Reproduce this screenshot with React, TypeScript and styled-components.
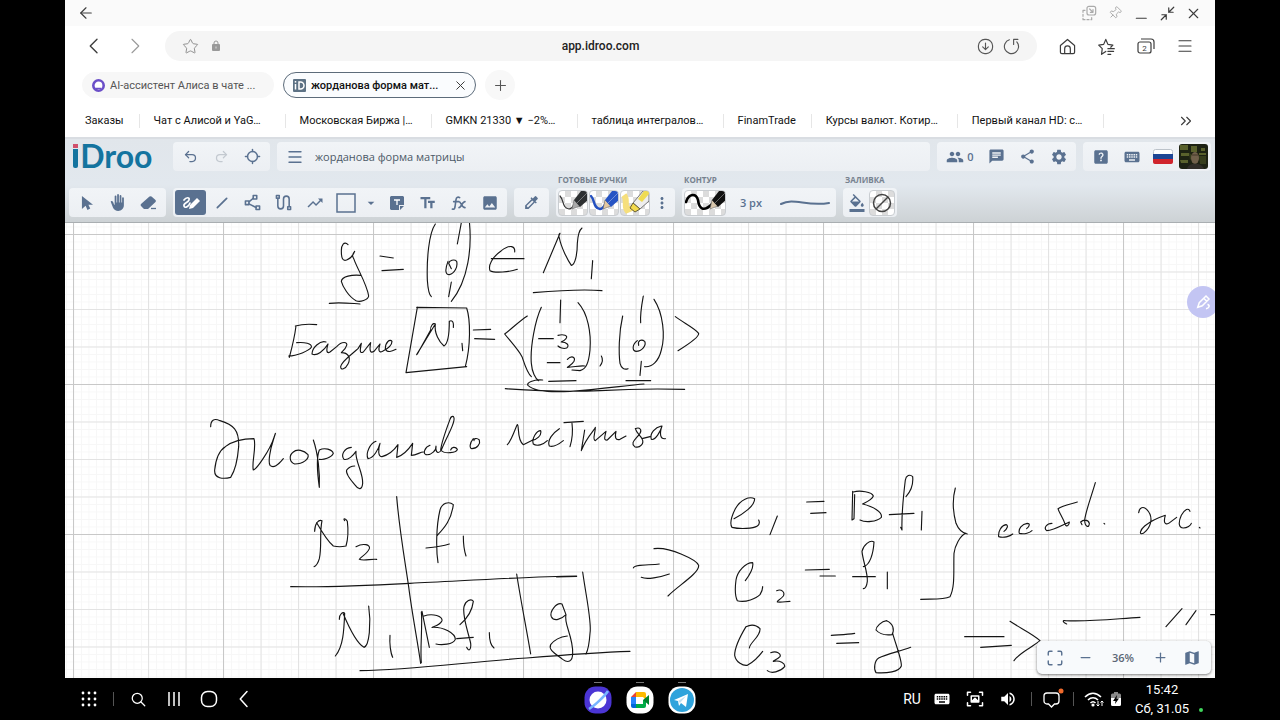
import React from "react";
import styled, { createGlobalStyle } from "styled-components";
import {
  ArrowLeft, ChevronsRight, Locate, Maximize, Menu, Minus, Pin, Plus, Star, Undo2, Redo2, X,
} from "lucide-react";
import {
  MdArrowDropDown, MdBackHand, MdChat, MdColorize, MdFormatColorFill, MdHelpCenter, MdImage, MdKeyboard, MdMap,
  MdMoreVert, MdPeople, MdSettings, MdShare, MdTrendingUp, MdVolumeUp,
} from "react-icons/md";

const slate = "#5a7190";

const GlobalStyle = createGlobalStyle`
  * { box-sizing: border-box; }
  body { margin: 0; background: #000; }
  button, input { font: inherit; color: inherit; border: 0; background: none; padding: 0; margin: 0; }
  svg { display: block; flex: none; }
`;

const Screen = styled.div`
  min-height: 100vh;
  display: flex;
  flex-direction: column;
  background: #000;
  font-family: Roboto, "Liberation Sans", sans-serif;
  font-size: 12px;
`;
const BrowserWindow = styled.div`
  flex: 1;
  margin: 0 65px;
  display: flex;
  flex-direction: column;
  background: #fff;
  overflow: hidden;
`;
const IconButton = styled.button<{ $w: number; $color?: string }>`
  flex: none;
  width: ${(p) => p.$w}px;
  height: 26px;
  display: flex;
  align-items: center;
  justify-content: center;
  color: ${(p) => p.$color ?? "#3c3c3c"};
`;
const Spacer = styled.div`
  flex: 1;
`;

/* Browser chrome */
const TitleBar = styled.header`
  height: 26px;
  display: flex;
  align-items: center;
  padding: 0 9px 0 8px;
  background: #fafafa;
`;
const TiltedPin = styled(Pin)`
  transform: rotate(45deg);
`;
const AddressRow = styled.div`
  height: 40px;
  display: flex;
  align-items: center;
  padding: 0 11px 0 8px;
`;
const UrlBar = styled.div`
  flex: 1;
  min-width: 0;
  height: 30px;
  margin: 0 11px 0 10px;
  padding: 0 13px 0 12px;
  display: flex;
  align-items: center;
  border-radius: 15px;
  background: #f5f5f5;
`;
const UrlInput = styled.input`
  flex: 1;
  min-width: 0;
  text-align: center;
  font-weight: 500;
  color: #222;
`;
const TabStrip = styled.nav`
  height: 38px;
  display: flex;
  align-items: center;
  gap: 9px;
  padding-left: 17px;
  font-size: 11px;
`;
const Tab = styled.div<{ $active?: boolean }>`
  width: ${(p) => (p.$active ? 193 : 192)}px;
  height: 26px;
  display: flex;
  align-items: center;
  padding: 0 2px 0 9px;
  border-radius: 13px;
  border: 1px solid ${(p) => (p.$active ? "#5c6b7a" : "#f7f7f7")};
  background: ${(p) => (p.$active ? "#fafcfe" : "#f7f7f7")};
  color: ${(p) => (p.$active ? "#111" : "#555")};
  font-weight: ${(p) => (p.$active ? 500 : 400)};
`;
const TabLabel = styled.button`
  flex: 1;
  display: flex;
  align-items: center;
  gap: 5px;
  white-space: nowrap;
`;
const NewTab = styled.button`
  width: 30px;
  height: 30px;
  border-radius: 15px;
  display: grid;
  place-items: center;
  background: #f8f8f8;
  color: #555;
`;
const Bookmarks = styled.nav`
  height: 33px;
  display: flex;
  align-items: center;
  padding: 0 10px 0 6px;
  font-size: 11px;
`;
const Bookmark = styled.a<{ $wide?: boolean }>`
  flex: none;
  width: ${(p) => (p.$wide ? "146px" : "auto")};
  padding: 0 15px 0 14px;
  border-right: 1px solid #e6e6e6;
  line-height: 14px;
  color: #111;
  text-decoration: none;
  white-space: nowrap;
`;

/* Whiteboard application */
const AppBar = styled.div`
  display: flex;
  flex-direction: column;
  gap: 1px;
  height: 86px;
  padding: 3px 4px 4px;
  border-top: 2px solid #d9dde2;
  border-bottom: 1px solid #a9aeb1;
  background: linear-gradient(#e1e6eb, #e2e8ee 55%, #cdd2d5);
  color: ${slate};
  font-family: "Open Sans", "Noto Sans", sans-serif;
`;
const AppRow = styled.div`
  display: flex;
  gap: 7px;
  align-items: flex-end;
`;
const Group = styled.div<{ $grow?: boolean }>`
  flex: ${(p) => (p.$grow ? "1" : "none")};
  height: 29px;
  display: flex;
  align-items: center;
  padding: 0 2px;
  border-radius: 4px;
  background: linear-gradient(#f1f4f7, #eceff3);
`;
const SwatchGroup = styled(Group)`
  gap: 1px;
`;
const Section = styled.section`
  display: flex;
  flex-direction: column;
`;
const SectionLabel = styled.h2`
  margin: 0;
  height: 16px;
  padding: 2px 2px 0;
  font-size: 8px;
  line-height: 12px;
  font-weight: 700;
  color: #77828f;
`;
const Logo = styled.h1`
  flex: none;
  width: 97px;
  height: 29px;
  margin: 0;
  padding-left: 3px;
  font-family: Lato, sans-serif;
  font-size: 32px;
  line-height: 28px;
  font-weight: 700;
  color: #14749f;
`;
const LogoI = styled.span`
  position: relative;
  color: transparent;
  &::before, &::after {
    content: "";
    position: absolute;
    left: 1px;
    width: 5px;
  }
  &::before { top: 8px; height: 4px; background: #d0506c; }
  &::after { top: 13px; height: 19px; background: #14749f; border-radius: 0 0 2px 2px; }
`;
const Tool = styled.button<{ $active?: boolean; $w?: number; $faded?: boolean }>`
  flex: none;
  width: ${(p) => p.$w ?? 31}px;
  height: 25px;
  display: flex;
  align-items: center;
  justify-content: center;
  gap: 3px;
  border-radius: 3px;
  background: ${(p) => (p.$active ? slate : "none")};
  color: ${(p) => (p.$active ? "#fff" : p.$faded ? "#c3c9d0" : slate)};
`;
const Swatch = styled.button<{ $w: number }>`
  flex: none;
  width: ${(p) => p.$w}px;
  height: 26px;
  border: 1px solid #c9cdd1;
  border-radius: 4px;
  overflow: hidden;
  background: repeating-conic-gradient(#dcdcdc 0 25%, #fff 0 50%) 0 0 / 12px 12px;
`;
const DocTitle = styled.input`
  flex: 1;
  min-width: 0;
  padding-left: 5px;
  font-size: 11px;
  color: #4c5967;
`;
const StrokeSize = styled.span`
  width: 50px;
  text-align: center;
  font-size: 11px;
  font-weight: 600;
`;
const PeopleCount = styled.span`
  font-size: 11px;
  font-weight: 600;
`;

const Board = styled.main`
  position: relative;
  flex: 1;
  min-height: 455px;
  overflow: hidden;
  background: #fff;
`;
const Ink = styled.svg`
  position: absolute;
  inset: 0;
  width: 100%;
  height: 100%;
`;
const FloatingPen = styled.button`
  position: absolute;
  top: 63px;
  right: -4px;
  width: 32px;
  height: 32px;
  display: grid;
  place-items: center;
  border-radius: 16px;
  background: #c3c5f3;
`;
const ZoomPanel = styled.div`
  position: absolute;
  right: 4px;
  bottom: 4px;
  height: 33px;
  display: flex;
  align-items: center;
  padding: 0 4px 0 2px;
  border-radius: 5px;
  background: #f8fafc;
  box-shadow: 0 1px 3px #0008;
  color: ${slate};
  font-family: "Open Sans", "Noto Sans", sans-serif;
  font-weight: 600;
`;
const ZoomValue = styled.output`
  width: 44px;
  text-align: center;
  font-size: 11px;
  color: #5b6675;
`;

/* System bar */
const TaskBar = styled.footer`
  height: 42px;
  padding: 0 71px;
  display: grid;
  grid-template-columns: 1fr auto 1fr;
  color: #fff;
`;
const TaskGroup = styled.div<{ $end?: boolean }>`
  display: flex;
  align-items: center;
  justify-content: ${(p) => (p.$end ? "flex-end" : "flex-start")};
`;
const Divider = styled.span`
  width: 1px;
  height: 14px;
  margin: 0 7px;
  background: #555;
`;
const AppIcon = styled.button`
  width: 42px;
  height: 42px;
  display: flex;
  flex-direction: column;
  align-items: center;
  gap: 3px;
  padding-top: 4px;
  &::before {
    content: "";
    width: 8px;
    height: 1px;
    background: #777;
  }
`;
const Language = styled.span`
  width: 26px;
  font-size: 14px;
  text-align: center;
`;
const Clock = styled.time`
  width: 62px;
  margin-left: 6px;
  font-size: 13px;
  line-height: 19px;
  text-align: center;
  white-space: nowrap;
`;
const Status = styled.span`
  width: 4px;
  height: 4px;
  margin: 22px 6px 0;
  border-radius: 2px;
  background: #3fd65c;
`;

type IconProps = { size?: number; sw?: number; children: React.ReactNode };
const Line = ({ size = 18, sw = 1.6, children }: IconProps) => (
  <svg width={size} height={size} viewBox="0 0 24 24" fill="none" stroke="currentColor" strokeWidth={sw} strokeLinecap="round" strokeLinejoin="round">
    {children}
  </svg>
);

const bookmarks = [
  ["Заказы"], ["Чат с Алисой и YaG…", 1], ["Московская Биржа |…", 1], ["GMKN 21330 ▼ −2%…", 1],
  ["таблица интегралов…", 1], ["FinamTrade"], ["Курсы валют. Котир…", 1], ["Первый канал HD: с…", 1],
] as [string, number?][];

/* Handwritten strokes; each block has its own origin on the board and is drawn at triple size. */
const ink: { at: [number, number]; d: string[] }[] = [
  {
    at: [280, 220],
    d: [
      "M204 74C192 62 184 76 184 92C184 116 188 124 200 120C212 116 220 104 224 94C216 104 216 108 222 118C232 146 262 196 266 228C264 240 240 248 228 242C206 230 188 200 184 184C186 168 216 164 242 166",
      "M148 250C180 246 210 250 240 252M300 108L340 114M306 152L370 148",
      "M466 12C446 40 440 120 442 180C444 210 446 224 454 230M544 8L532 72",
      "M504 124C494 150 496 164 508 164C524 160 534 140 530 124C522 116 508 122 506 130L514 146M514 186L506 230M568 4C576 80 566 180 514 244",
      "M704 96C706 78 690 72 664 92C636 112 624 136 630 152C644 160 690 156 712 148M634 116L732 116",
      "M790 158L840 40C834 44 836 46 838 54C844 84 864 122 874 136C886 134 892 100 892 70C894 40 898 30 906 24M938 122L934 176M760 218C830 212 900 206 966 212",
      "M110 314C90 312 60 314 46 318M48 318C44 350 34 390 28 412M26 408C50 408 88 392 94 382C98 370 72 366 50 368",
      "M138 366C120 360 96 384 96 402C110 410 132 392 144 372C138 392 140 402 150 396L170 380C186 362 204 366 200 376C196 390 184 396 184 398C204 398 214 412 204 432C196 448 182 452 182 440C184 424 214 404 234 386L244 370C240 390 238 402 250 396L272 368C268 390 270 402 282 394L300 372C294 390 296 400 308 394C320 388 336 376 336 364C330 356 316 366 316 386C322 400 336 394 348 388",
      "M412 262L378 458L560 440M410 262L560 264C572 300 572 380 556 440",
      "M410 404L466 312C460 306 450 320 452 330L412 402M466 312C462 340 478 366 492 378C506 370 508 330 508 304C514 300 522 302 520 322M546 370L548 392",
      "M580 330L632 328M584 356L644 358",
      "M742 288C720 302 690 330 674 342C690 362 716 390 726 410C736 440 742 460 754 470M784 262C766 300 750 380 754 430C756 456 766 476 776 482",
      "M842 240L840 308M776 356L820 356M834 346C850 342 866 346 858 356C852 364 842 366 844 366C860 366 870 376 860 384C850 388 838 382 834 378",
      "M802 428L840 428M862 418C874 406 888 410 882 424C876 436 862 440 862 442C880 442 900 436 914 438M894 248C924 280 934 340 930 390C926 430 918 448 900 452L876 450M964 408C970 418 966 430 960 438",
      "M1028 288C1016 340 1016 400 1020 430C1024 446 1034 450 1044 446M1090 228C1086 250 1080 280 1082 308M1072 362C1056 374 1056 392 1068 394C1086 394 1100 376 1094 364C1084 356 1072 362 1076 376M1084 424L1080 466",
      "M1122 238C1150 280 1156 350 1144 390C1136 424 1116 442 1094 440M1186 290C1210 308 1244 324 1256 340C1258 352 1220 376 1194 392",
      "M806 484L888 482M1038 482L1112 482M788 480C760 478 738 488 744 496C760 512 800 518 870 514C960 508 1040 496 1092 492M676 506C760 512 860 516 960 512C1060 506 1140 506 1214 508",
    ],
  },
  {
    at: [190, 390],
    d: [
      "M62 110C62 90 72 84 90 92C130 104 148 120 146 170C142 220 130 250 122 262C100 268 72 266 74 240C78 200 90 180 106 170C130 152 160 146 192 146C200 170 184 220 190 240C200 238 240 180 252 142C258 124 258 126 250 150C240 180 234 216 240 226C250 236 264 226 280 206",
      "M310 186C296 196 298 216 314 222C340 222 358 206 354 194C342 180 320 176 310 186M370 150C384 190 390 250 388 292C382 250 380 200 388 180C404 172 426 178 430 190C424 204 400 210 388 208",
      "M484 172C462 174 452 196 462 208C474 212 490 196 498 184C494 210 520 250 518 280C516 300 506 300 496 286C480 268 466 250 470 240C478 230 490 228 494 228",
      "M558 154C540 160 526 190 534 206C552 204 566 176 570 160C564 180 564 200 576 200C592 196 610 184 624 164L620 202C640 196 660 172 668 160L664 196C680 196 690 186 700 186",
      "M720 166C704 172 698 190 708 194C724 196 740 180 738 168C736 190 746 192 754 180C770 140 790 110 792 90C794 76 784 76 780 88C768 120 754 160 752 180C764 194 800 188 802 178C796 168 784 172 782 180",
      "M850 146C838 160 838 176 846 176C862 176 872 160 868 150C860 142 850 146 852 152",
      "M952 164C966 150 978 108 982 104C988 104 980 150 1000 164L1024 152C1040 150 1056 136 1052 122C1040 122 1024 146 1030 162C1040 170 1060 164 1072 152M1108 116C1090 128 1070 150 1078 168C1090 172 1110 160 1120 152",
      "M1122 98L1180 94M1146 100C1150 130 1146 150 1140 170M1184 120L1174 182C1190 140 1216 118 1216 112C1216 130 1206 150 1216 152L1248 124C1244 140 1240 152 1252 150L1278 124C1274 142 1276 152 1290 148L1308 138",
      "M1336 116C1350 110 1356 120 1350 130C1336 150 1320 158 1334 170C1350 176 1364 160 1356 146C1350 134 1340 130 1336 116M1356 146L1380 140M1414 108C1396 112 1378 130 1384 148C1396 152 1412 124 1416 108C1408 130 1410 148 1426 146",
    ],
  },
  {
    at: [280, 490],
    d: [
      "M104 124C104 100 116 88 126 92C118 130 126 170 118 206C114 220 108 228 102 230M110 98C126 126 144 154 160 168C176 172 190 170 198 168C206 140 204 110 202 94C196 84 188 84 194 92",
      "M228 170C250 158 272 164 268 176C262 192 240 202 238 208C250 214 274 206 290 208M350 20C358 120 376 220 386 290C396 370 412 450 422 520",
      "M472 136C490 116 514 92 520 44C506 32 486 40 480 60C468 110 468 180 474 218M438 174C460 172 490 168 508 162M550 138C550 160 552 180 558 198",
      "M32 290C140 292 280 286 390 280C560 272 740 260 890 258M830 261L890 259",
      "M178 388C178 370 190 364 194 370C192 420 190 470 166 498M190 372C206 410 230 460 252 472C268 468 274 400 266 348M330 436C328 460 332 490 338 502",
      "M426 364L448 472M424 366C428 400 420 480 424 518M432 378C460 368 488 380 486 392C480 406 458 410 456 412C490 410 526 430 526 448C520 464 484 466 468 462",
      "M540 404C556 390 576 370 580 334C574 324 556 332 552 350C546 380 566 430 572 460C574 480 566 486 560 472M530 446L580 442M628 428C628 450 632 466 642 474M710 252C722 330 740 420 752 492",
      "M846 342C830 336 808 364 814 380C822 396 844 388 858 374L846 342M858 374C850 400 880 440 878 490C878 516 864 520 848 508C828 492 804 480 812 464C824 448 846 440 862 438M908 246C920 330 936 400 930 430C928 460 924 480 918 492",
      "M240 542C400 540 560 516 740 504C860 494 980 486 1050 484M1060 234C1062 222 1110 226 1138 222M1084 262C1100 270 1140 262 1168 252M1122 176C1170 170 1250 210 1256 226C1258 250 1190 290 1164 318",
    ],
  },
  {
    at: [700, 470],
    d: [
      "M102 146C130 132 164 108 164 86C148 78 122 88 106 116C94 140 88 160 96 172C120 178 160 176 172 168C180 162 178 154 176 150M232 138L210 194M320 96L372 94M332 130L378 128",
      "M458 64L456 150L462 146L464 74M460 66C480 60 516 66 520 78C514 92 490 100 488 102C520 110 548 126 544 142C530 156 496 158 480 150",
      "M618 80C636 60 640 40 638 20C630 12 618 16 616 30C610 80 604 130 606 180L602 172M568 134L642 130M666 124L664 180",
      "M136 332C148 316 162 296 158 278C136 278 112 304 108 330C104 360 106 380 112 392C136 400 170 384 180 374C186 364 188 356 188 350M230 362C244 356 256 366 250 378C240 390 230 392 232 396C246 398 258 394 270 394",
      "M316 300L388 298M360 318L406 318M490 290C510 286 520 250 522 216C510 208 490 226 486 244C488 270 504 310 502 334C500 350 494 356 490 356M458 320L526 320M562 306L562 356",
      "M148 534C150 516 182 500 180 476C166 462 150 464 138 470C120 500 104 530 104 556C108 578 130 588 142 586C160 576 176 560 188 544M212 548C230 542 244 550 240 560C230 570 218 572 220 574C240 570 256 580 254 590C240 606 214 612 202 602",
      "M394 496C420 494 440 494 464 490M410 520L476 518M560 452C544 454 528 470 528 480C540 494 560 496 576 494C584 480 580 460 560 452M578 490C586 520 606 570 604 588C598 606 560 610 528 608C520 596 524 572 536 564C560 552 600 544 632 532",
      "M766 54C756 90 760 130 768 160C776 180 790 190 802 192M798 190C780 196 764 230 762 250C760 300 766 350 750 380C730 390 690 386 662 388",
    ],
  },
  {
    at: [930, 470],
    d: [
      "M222 184C232 176 236 166 228 164C214 166 204 184 206 200C220 204 240 200 248 192M290 176C300 168 300 160 292 160C276 162 264 176 268 190C284 194 300 188 306 182",
      "M366 160C350 160 340 174 350 182C370 182 400 164 418 156C418 166 410 172 406 164C398 140 386 126 384 116C400 106 424 102 442 96M496 38C484 80 468 120 464 150C464 170 478 176 478 160C474 146 458 150 452 156L456 164M522 160L524 162",
      "M626 128C628 112 640 108 650 118C672 140 664 172 640 190C626 196 630 180 644 168C664 152 688 142 706 136C700 156 704 166 716 160L740 142M780 124C776 112 764 118 754 136C744 158 746 174 760 174C772 174 782 166 784 160M808 172L810 174",
      "M104 500L222 500M152 532L244 526M240 454C270 474 312 494 330 512C310 530 270 546 252 572M410 462C396 456 398 450 406 452C480 456 560 446 630 442M756 416L708 470M798 422L768 464M842 434L858 434",
    ],
  },
];

const Pen = ({ ink: c, body, w, sw, tip }: { ink: string; body: string; w: number; sw: number; tip: string }) => (
  <svg width={w} height="24" viewBox={`0 0 ${w} 24`}>
    <path d={w > 30 ? "M1 11C4 2 11 2 13 9C14 17 18 22 27 13" : "M1 5C5 9 3 17 10 18C13 18 14 15 16 12"} fill="none" stroke={c} strokeWidth={sw} strokeLinecap="round" />
    <g transform={`translate(${w - 28} 0)`}>
      <path d="M13 18L15 9L21 15Z" fill={tip} stroke="#666" strokeWidth=".6" />
      <path d="M15 9L22 0H30V8L21 16Z" fill={body} />
      <path d="M18 12L29 1" stroke="#fff" strokeOpacity=".35" strokeWidth="1" />
    </g>
  </svg>
);

export default function App() {
  return (
    <Screen>
      <GlobalStyle />
      <BrowserWindow>
        <TitleBar>
          <IconButton $w={26} aria-label="Назад"><ArrowLeft size={18} strokeWidth={1.5} /></IconButton>
          <Spacer />
          <IconButton $w={26} $color="#aaa" aria-label="Всплывающее окно">
            <Line size={16} sw={1.8}><rect x="9" y="2" width="13" height="13" rx="3" /><path d="M13 6l5 5M18 7v4h-4M6 8H3v3M3 14v3M3 20v2h3M9 22h3M15 22h1v-3" /></Line>
          </IconButton>
          <IconButton $w={26} $color="#aaa" aria-label="Закрепить"><TiltedPin size={14} strokeWidth={1.6} /></IconButton>
          <IconButton $w={26} aria-label="Свернуть"><Line size={14} sw={2}><path d="M4 21h17" /></Line></IconButton>
          <IconButton $w={26} aria-label="Уменьшить">
            <Line size={15} sw={1.9}><path d="M22 2l-8 8M14 3v7h7M2 22l8-8M3 14h7v7" /></Line>
          </IconButton>
          <IconButton $w={26} aria-label="Закрыть"><X size={17} strokeWidth={1.6} /></IconButton>
        </TitleBar>

        <AddressRow>
          <IconButton $w={41} aria-label="Предыдущая страница"><Line size={18} sw={1.8}><path d="M16 3L7 12l9 9" /></Line></IconButton>
          <IconButton $w={41} $color="#999" aria-label="Следующая страница"><Line size={18} sw={1.5}><path d="M8 3l9 9-9 9" /></Line></IconButton>
          <UrlBar>
            <IconButton $w={26} $color="#888" aria-label="В избранное"><Star size={17} strokeWidth={1.3} /></IconButton>
            <IconButton $w={26} $color="#999" aria-label="Сведения о сайте">
              <svg width="10" height="12" viewBox="0 0 10 12"><rect x="1" y="4" width="8" height="7" rx="1" fill="currentColor" /><path d="M3 5V3a2 2 0 0 1 4 0v2" fill="none" stroke="currentColor" strokeWidth="1" /><path d="M5 6.500v2" stroke="#ddd" /></svg>
            </IconButton>
            <UrlInput aria-label="Адрес" defaultValue="app.idroo.com" />
            <IconButton $w={26} $color="#555" aria-label="Загрузки">
              <Line size={17}><rect x="2" y="2" width="20" height="20" rx="9" /><path d="M12 7v9M8 12.500l4 4 4-4" /></Line>
            </IconButton>
            <IconButton $w={26} $color="#555" aria-label="Обновить">
              <Line size={17}><path d="M9 2.500A10 10 0 1 0 19.500 5.500M15 2h6M15 2v7" /></Line>
            </IconButton>
          </UrlBar>
          <IconButton $w={39} aria-label="Домой">
            <Line size={17} sw={1.700}><path d="M2 10.500L12 2l10 8.500V20a2 2 0 0 1-2 2H4a2 2 0 0 1-2-2zM8 22v-7a4 4 0 0 1 8 0v7" /></Line>
          </IconButton>
          <IconButton $w={39} aria-label="Закладки">
            <Line size={17} sw={1.700}><path d="M11 19l-6 4 1-8-5-5 7-1 3-7 3 7 7 1-3 3M14 15h9M14 19h8M14 23h4" /></Line>
          </IconButton>
          <IconButton $w={39} aria-label="Вкладки">
            <svg width="18" height="16" viewBox="0 0 18 16" fill="none" stroke="currentColor" strokeWidth="1.2"><rect x="1" y="4" width="13" height="11" rx="2" /><path d="M4 1h10a3 3 0 0 1 3 3v7" /><text x="7.500" y="12.500" fontSize="8" textAnchor="middle" fill="currentColor" stroke="none">2</text></svg>
          </IconButton>
          <IconButton $w={39} aria-label="Меню"><Menu size={18} strokeWidth={1.5} /></IconButton>
        </AddressRow>

        <TabStrip>
          <Tab>
            <TabLabel>
              <svg width="13" height="13" viewBox="0 0 13 13"><circle cx="6.500" cy="6.500" r="5.200" fill="#fff" stroke="#6b4fc8" strokeWidth="2.600" /><path d="M3.500 9.500h6" stroke="#6b4fc8" strokeWidth="1.500" /></svg>
              AI-ассистент Алиса в чате ...
            </TabLabel>
          </Tab>
          <Tab $active>
            <TabLabel>
              <svg width="13" height="13" viewBox="0 0 13 13"><rect width="13" height="13" rx="1" fill="#5d7285" /><path d="M2.500 5v5.500M6 3v7h1.500a3.500 3.500 0 0 0 0-7z" fill="none" stroke="#fff" strokeWidth="1.500" /><path d="M2.500 2v1.600" stroke="#fff" strokeWidth="1.500" /></svg>
              жорданова форма мат...
            </TabLabel>
            <IconButton $w={26} aria-label="Закрыть вкладку"><X size={15} strokeWidth={1.6} /></IconButton>
          </Tab>
          <NewTab aria-label="Новая вкладка"><Plus size={17} strokeWidth={1.5} /></NewTab>
        </TabStrip>

        <Bookmarks>
          {bookmarks.map(([name, wide]) => <Bookmark key={name} href="#" $wide={!!wide}>{name}</Bookmark>)}
          <Spacer />
          <IconButton $w={39} aria-label="Ещё закладки"><ChevronsRight size={18} strokeWidth={1.5} /></IconButton>
        </Bookmarks>

        <AppBar>
          <AppRow>
            <Logo><LogoI>i</LogoI>Droo</Logo>
            <Group>
              <Tool aria-label="Отменить"><Undo2 size={15} /></Tool>
              <Tool $faded aria-label="Повторить"><Redo2 size={15} /></Tool>
              <Tool aria-label="Центрировать"><Locate size={17} strokeWidth={2} /></Tool>
            </Group>
            <Group $grow>
              <Tool aria-label="Меню доски"><Menu size={18} strokeWidth={1.800} /></Tool>
              <DocTitle aria-label="Название" defaultValue="жорданова форма матрицы" />
            </Group>
            <Group>
              <Tool $w={42} aria-label="Участники"><MdPeople size={18} /><PeopleCount>0</PeopleCount></Tool>
              <Tool aria-label="Чат"><MdChat size={17} /></Tool>
              <Tool aria-label="Поделиться"><MdShare size={17} /></Tool>
              <Tool aria-label="Настройки"><MdSettings size={18} /></Tool>
            </Group>
            <Group>
              <Tool aria-label="Справка"><MdHelpCenter size={18} /></Tool>
              <Tool aria-label="Клавиатура"><MdKeyboard size={18} /></Tool>
              <Tool aria-label="Язык">
                <svg width="20" height="15" viewBox="0 0 20 15"><rect x=".5" y=".5" width="19" height="14" rx="2" fill="#fff" stroke="#bcc3ca" /><path d="M0 5h20v5H0z" fill="#1d4694" /><path d="M0 10h20v3a2 2 0 0 1-2 2H2a2 2 0 0 1-2-2z" fill="#d0242c" /></svg>
              </Tool>
              <Tool aria-label="Профиль">
                <svg width="29" height="25" viewBox="0 0 29 25"><rect width="29" height="25" rx="3" fill="#1d2213" /><path d="M1 1h8v5H1zM12 2h6v6h-6zM2 9h8v3H2zM1 16h8v3H2zM22 4h4v3h-4zM20 9h7v2h-7z" fill="#59612c" /><path d="M10 9l5 3-4 4zM20 12h7v8h-6z" fill="#363d1c" /><ellipse cx="16" cy="14" rx="4" ry="6" fill="#70604a" /><path d="M8 25c1-7 15-7 17 0z" fill="#302d28" /><path d="M13 11h6" stroke="#423629" /></svg>
              </Tool>
            </Group>
          </AppRow>

          <AppRow>
            <Group>
              <Tool aria-label="Выбор"><svg width="12" height="16" viewBox="0 0 13 17"><path d="M1 1v14l4-3.500 2 4.500 3-1.500-2-4h5z" fill="currentColor" /></svg></Tool>
              <Tool aria-label="Рука"><MdBackHand size={17} /></Tool>
              <Tool aria-label="Ластик"><svg width="18" height="16" viewBox="0 0 18 16"><path d="M9.500 1.600a1.500 1.500 0 0 1 2 0l4 3.500a1.500 1.500 0 0 1 0 2L8 14H4L1 11a1.500 1.500 0 0 1 0-2z" fill="currentColor" /><path d="M11 13.500h5" stroke="currentColor" strokeWidth="1.300" /></svg></Tool>
            </Group>
            <Group>
              <Tool $active aria-label="Карандаш">
                <svg width="18" height="16" viewBox="0 0 18 16"><path d="M2 5c2-3 6-3 5 0S1 8 2 11s5 0 6-3" fill="none" stroke="currentColor" strokeWidth="1.700" strokeLinecap="round" /><path d="M7 14l1-4 7-7 3 3-7 7z" fill="currentColor" /></svg>
              </Tool>
              <Tool aria-label="Линия"><Line size={16} sw={2.600}><path d="M5 19L19 5" /></Line></Tool>
              <Tool aria-label="Ломаная"><Line size={17} sw={2.200}><rect x="2" y="10" width="5" height="5" /><rect x="13" y="2" width="5" height="5" /><rect x="17" y="17" width="5" height="5" /><path d="M7 11l6-5M7 14l10 5" /></Line></Tool>
              <Tool aria-label="Кривая"><Line size={17} sw={2.200}><rect x="2" y="2" width="4" height="4" /><path d="M4 6v11a4 4 0 0 0 8 0V7a4 4 0 0 1 8 0v10" /><rect x="18" y="18" width="4" height="4" /></Line></Tool>
              <Tool aria-label="Стрелка"><MdTrendingUp size={18} /></Tool>
              <Tool aria-label="Прямоугольник"><svg width="20" height="20" viewBox="0 0 20 20"><rect x="1" y="1" width="18" height="18" fill="none" stroke="currentColor" strokeWidth="1.500" /></svg></Tool>
              <Tool $w={20} aria-label="Другие фигуры"><MdArrowDropDown size={16} /></Tool>
              <Tool aria-label="Заметка"><svg width="14" height="14" viewBox="0 0 14 14"><path d="M1 0h12l1 1v8H9v5H1l-1-1V1z" fill="currentColor" /><path d="M10 14v-4h4z" fill="currentColor" /><path d="M4 4h6M7 4v5" stroke="#fff" strokeWidth="1.300" /></svg></Tool>
              <Tool aria-label="Текст"><svg width="18" height="18" viewBox="0 0 24 24"><path d="M2 4v3h5v12h3V7h5V4H2zm19 5h-9v3h3v7h3v-7h3V9z" fill="currentColor" /></svg></Tool>
              <Tool aria-label="Формула"><Line size={16} sw={2.400}><path d="M13 4c-3-2-5 0-5.500 3L6 18c-.5 3-2 4-4 3M4 10h8M12 10c3 0 4 9 9 9M21 10c-4 0-6 9-9 9" /></Line></Tool>
              <Tool aria-label="Изображение"><MdImage size={18} /></Tool>
            </Group>
            <Group><Tool aria-label="Пипетка"><MdColorize size={17} /></Tool></Group>
            <Section>
              <SectionLabel>ГОТОВЫЕ РУЧКИ</SectionLabel>
              <SwatchGroup>
                <Swatch $w={30} aria-label="Чёрная ручка"><Pen w={28} ink="#333" body="#2d3032" sw={1.200} tip="#aaa" /></Swatch>
                <Swatch $w={30} aria-label="Синяя ручка"><Pen w={28} ink="#2450c0" body="#2654c4" sw={2.400} tip="#e3c8a0" /></Swatch>
                <Swatch $w={30} aria-label="Маркер">
                  <svg width="28" height="24" viewBox="0 0 28 24"><path d="M3 4c4 5 0 11 3 15l5-2" fill="none" stroke="#f6df7c" strokeWidth="6" /><path d="M12 12L22 0h6v10l-9 8z" fill="#eee" stroke="#777" /><path d="M17 8l6-8h5v3l-7 8z" fill="#efdb52" /><path d="M9 17l3-5 7 6-5 3z" fill="#f3d94c" stroke="#655d38" /></svg>
                </Swatch>
                <Tool $w={22} aria-label="Ещё ручки"><MdMoreVert size={18} /></Tool>
              </SwatchGroup>
            </Section>
            <Section>
              <SectionLabel>КОНТУР</SectionLabel>
              <Group>
                <Swatch $w={42} aria-label="Цвет контура"><Pen w={40} ink="#000" body="#111" sw={2.600} tip="#d8c6ac" /></Swatch>
                <StrokeSize>3 px</StrokeSize>
                <Tool $w={58} aria-label="Тип линии"><svg width="50" height="8" viewBox="0 0 50 8"><path d="M1 5C14-2 26 8 49 4" fill="none" stroke="currentColor" strokeWidth="2" strokeLinecap="round" /></svg></Tool>
              </Group>
            </Section>
            <Section>
              <SectionLabel>ЗАЛИВКА</SectionLabel>
              <Group>
                <Tool $w={24} aria-label="Заливка"><MdFormatColorFill size={18} /></Tool>
                <Swatch $w={26} aria-label="Без заливки"><svg width="24" height="24" viewBox="0 0 24 24" fill="none" stroke="#444" strokeWidth="1.500"><circle cx="12" cy="12" r="8.500" /><path d="M6 18L18 6" /></svg></Swatch>
              </Group>
            </Section>
          </AppRow>
        </AppBar>

        <Board>
          <Ink viewBox="65 223 1150 455" preserveAspectRatio="xMinYMin slice" role="img" aria-label="Жорданова лестница">
            <defs>
              <pattern id="fine" x="73.500" y="234" width="7.500" height="7.500" patternUnits="userSpaceOnUse"><path d="M0 .5h7.500M.5 0v7.500" stroke="#f7f7f7" /></pattern>
              <pattern id="cell" x="73" y="234" width="37.500" height="37.500" patternUnits="userSpaceOnUse"><path d="M0 .5h37.500M.5 0v37.500" stroke="#e3e3e3" /></pattern>
              <pattern id="block" x="73" y="234" width="150" height="150" patternUnits="userSpaceOnUse"><path d="M0 .5h150M.5 0v150" stroke="#c8c8c8" /></pattern>
            </defs>
            {["fine", "cell", "block"].map((p) => <rect key={p} x="65" y="222" width="1150" height="1150" fill={`url(#${p})`} />)}
            {ink.map(({ at, d }) => (
              <g key={at.join()} transform={`translate(${at[0]} ${at[1]}) scale(.33333)`} fill="none" stroke="#151515" strokeWidth="3.400" strokeLinecap="round" strokeLinejoin="round">
                {d.map((s) => <path key={s} d={s} />)}
              </g>
            ))}
          </Ink>
          <FloatingPen aria-label="Перо"><svg width="18" height="18" viewBox="0 0 24 24" fill="none" stroke="#fff" strokeWidth="2"><path d="M5 19l2-6L16 4l4 4-9 9zM13 7l4 4M18 15c4 2 2 5-2 6" /></svg></FloatingPen>
          <ZoomPanel>
            <Tool aria-label="Показать всё"><Maximize size={18} strokeWidth={1.900} /></Tool>
            <Tool aria-label="Уменьшить масштаб"><Minus size={15} /></Tool>
            <ZoomValue>36%</ZoomValue>
            <Tool aria-label="Увеличить масштаб"><Plus size={15} /></Tool>
            <Tool aria-label="Карта"><MdMap size={18} /></Tool>
          </ZoomPanel>
        </Board>
      </BrowserWindow>

      <TaskBar>
        <TaskGroup>
          <IconButton $w={35} $color="#fff" aria-label="Приложения">
            <svg width="16" height="16" viewBox="0 0 16 16" fill="currentColor">{[2, 8, 14].map((y) => [2, 8, 14].map((x) => <circle key={`${x}-${y}`} cx={x} cy={y} r="1.400" />))}</svg>
          </IconButton>
          <Divider />
          <IconButton $w={35} $color="#fff" aria-label="Поиск"><Line size={15} sw={2}><circle cx="10" cy="10" r="8" /><path d="M16 16l6 6" /></Line></IconButton>
          <IconButton $w={35} $color="#fff" aria-label="Недавние"><svg width="14" height="16" viewBox="0 0 14 16" stroke="currentColor" strokeWidth="1.500"><path d="M2 1v14M7 1v14M12 1v14" /></svg></IconButton>
          <IconButton $w={35} $color="#fff" aria-label="Главный экран"><Line size={18} sw={2}><rect x="2" y="2" width="20" height="20" rx="8" /></Line></IconButton>
          <IconButton $w={35} $color="#fff" aria-label="Назад"><Line size={18} sw={2}><path d="M16 2L7 12l9 10" /></Line></IconButton>
        </TaskGroup>
        <TaskGroup>
          <AppIcon aria-label="Браузер">
            <svg width="28" height="28" viewBox="0 0 28 28"><rect x=".5" y=".5" width="27" height="27" rx="11" fill="#4b35d4" /><circle cx="14" cy="14" r="8.500" fill="#fff" /><path d="M5 23C10 20 20 11 24 5" fill="none" stroke="#77b4ff" strokeWidth="2.600" /></svg>
          </AppIcon>
          <AppIcon aria-label="Meet">
            <svg width="28" height="28" viewBox="0 0 28 28"><rect x=".5" y=".5" width="27" height="27" rx="11" fill="#fff" /><path d="M5 11h5v7H5z" fill="#2684fc" /><path d="M5 18h5v4H7a2 2 0 0 1-2-2z" fill="#0066da" /><path d="M5 11l5-5v5z" fill="#e94235" /><path d="M10 6h8a2 2 0 0 1 2 2v6l-3-3h-7z" fill="#ffba00" /><path d="M10 18h7v-4h3v6a2 2 0 0 1-2 2h-8z" fill="#00ac47" /><path d="M17 14l6-5v10z" fill="#00832d" /></svg>
          </AppIcon>
          <AppIcon aria-label="Telegram">
            <svg width="28" height="28" viewBox="0 0 28 28"><rect x=".5" y=".5" width="27" height="27" rx="11" fill="#fff" /><circle cx="14" cy="14" r="12" fill="#2fa3dc" /><path d="M6 14l14-6-2 13-5-4-2 3-1-5z" fill="#fff" /><path d="M10 15l8-5-6 7" fill="#c3dff0" /></svg>
          </AppIcon>
        </TaskGroup>
        <TaskGroup $end>
          <Language>RU</Language>
          <IconButton $w={33} $color="#fff" aria-label="Клавиатура"><MdKeyboard size={18} /></IconButton>
          <IconButton $w={33} $color="#fff" aria-label="Снимок экрана"><Line size={18} sw={2}><path d="M6 3H2v4M18 3h4v4M6 21H2v-4M18 21h4v-4" /><path d="M7 8h10v8H7z" /><path d="M8 15l4-4 4 4z" fill="currentColor" /></Line></IconButton>
          <IconButton $w={33} $color="#fff" aria-label="Громкость"><MdVolumeUp size={18} /></IconButton>
          <Divider />
          <IconButton $w={27} $color="#fff" aria-label="Уведомления">
            <svg width="22" height="22" viewBox="0 0 22 22"><path d="M5 5h9a3 3 0 0 1 3 3v5a3 3 0 0 1-3 3h-1.500l-3 3-3-3H5a3 3 0 0 1-3-3V8a3 3 0 0 1 3-3z" fill="none" stroke="currentColor" strokeWidth="1.300" /><circle cx="19" cy="3" r="2.500" fill="#ef6a2c" /></svg>
          </IconButton>
          <Divider />
          <IconButton $w={26} $color="#fff" aria-label="Wi-Fi"><svg width="20" height="16" viewBox="0 0 20 16" fill="none" stroke="currentColor" strokeWidth="1.600"><path d="M1 6c5-5 11-5 16 0M4 9c3-3 7-3 10 0M6.500 12c1.500-1.500 3.500-1.500 5 0" /><circle cx="9" cy="14" r=".8" fill="currentColor" /><path d="M14 10v5M12.500 13.500l1.500 1.500 1.500-1.500M18 15v-5M16.500 11.500L18 10l1.500 1.500" strokeWidth="1" /></svg></IconButton>
          <IconButton $w={18} $color="#fff" aria-label="Батарея"><svg width="10" height="14" viewBox="0 0 10 14"><path d="M3 0h4v1.500h1.500A1.500 1.500 0 0 1 10 3v3H0V3a1.500 1.500 0 0 1 1.500-1.500H3z" fill="#888" /><path d="M0 6h10v6.500A1.500 1.500 0 0 1 8.500 14h-7A1.500 1.500 0 0 1 0 12.500z" fill="#fff" /><path d="M6 3L2 9h2.500L4 12l4-5.500H5.500z" fill="#000" /></svg></IconButton>
          <Clock>15:42<br />Сб, 31.05</Clock>
          <Status />
        </TaskGroup>
      </TaskBar>
    </Screen>
  );
}
